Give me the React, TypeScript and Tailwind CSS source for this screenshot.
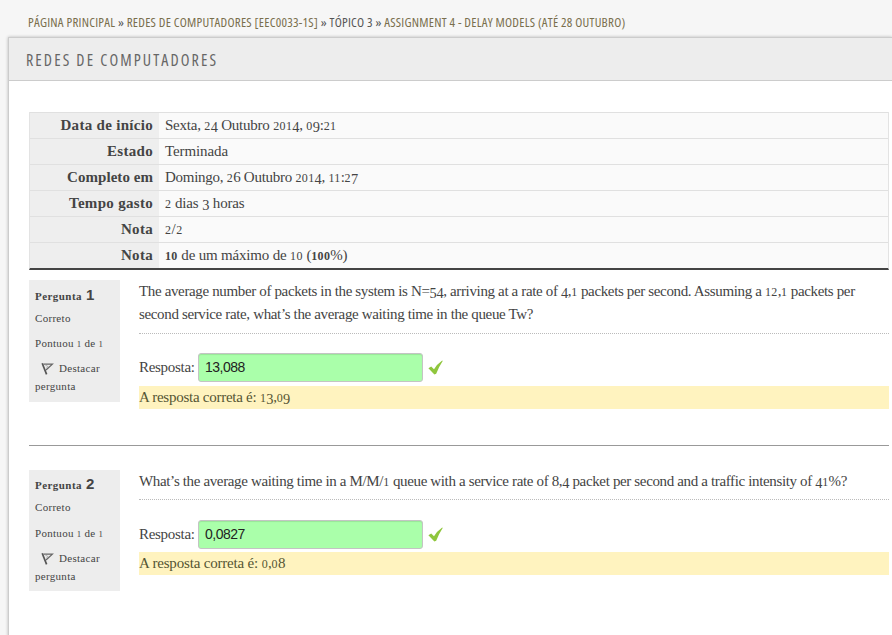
import { Fragment, type ReactNode } from "react";

/** Serif text whose digits sit like old-style figures: 0-2 at x-height, 3-5, 7 and 9 hanging below the line. */
function Serif({ children }: { children: string }) {
  return (
    <>
      {children.split(/([012]+|[34579]+)/).map((part, i) => {
        if (/^[012]+$/.test(part)) {
          return (
            <span key={i} className="text-[0.8em] leading-none tracking-[0.03em]">
              {part}
            </span>
          );
        }
        if (/^[34579]+$/.test(part)) {
          return (
            <span key={i} className="relative top-[0.16em] text-[0.96em] leading-none">
              {part}
            </span>
          );
        }
        return <Fragment key={i}>{part}</Fragment>;
      })}
    </>
  );
}

function FlagIcon() {
  return (
    <svg className="ml-[6px] mr-[5px] inline-block align-[-3px]" width="13" height="13" viewBox="0 0 13 13" fill="none">
      <path d="M1.2 1.2 L5.6 12.4" stroke="#555" strokeWidth="1.7" />
      <path d="M2.4 2.2 L11.4 2.2 L5 8" stroke="#666" strokeWidth="1.2" />
      <path d="M4.2 3 L7.2 4.6 L5 6.4" stroke="#aaa" strokeWidth="0.9" />
    </svg>
  );
}

function CheckIcon() {
  return (
    <svg className="ml-[5px] shrink-0" width="15" height="15" viewBox="0 0 15 15">
      <path d="M0.4 8.2 L3.2 6.6 L6 9.2 Q9 4 14.2 0.4 L14.7 1 Q11 6.5 8.2 13.8 L6.4 14.6 Z" fill="#8fc63d" />
    </svg>
  );
}

const rows: { label: string; labelClass: string; value: ReactNode; valueClass: string }[] = [
  {
    label: "Data de início",
    labelClass: "tracking-[0.3px]",
    value: <Serif>Sexta, 24 Outubro 2014, 09:21</Serif>,
    valueClass: "tracking-[-0.22px]",
  },
  { label: "Estado", labelClass: "tracking-[0.3px]", value: "Terminada", valueClass: "tracking-[-0.1px]" },
  {
    label: "Completo em",
    labelClass: "tracking-[0.05px]",
    value: <Serif>Domingo, 26 Outubro 2014, 11:27</Serif>,
    valueClass: "tracking-[-0.27px]",
  },
  {
    label: "Tempo gasto",
    labelClass: "tracking-[0.3px]",
    value: <Serif>2 dias 3 horas</Serif>,
    valueClass: "tracking-[-0.15px]",
  },
  { label: "Nota", labelClass: "tracking-[0.3px]", value: <Serif>2/2</Serif>, valueClass: "tracking-[0.8px]" },
  {
    label: "Nota",
    labelClass: "tracking-[0.3px]",
    value: (
      <>
        <b><Serif>10</Serif></b> <Serif>de um máximo de 10 (</Serif><b><Serif>100</Serif></b>%)
      </>
    ),
    valueClass: "tracking-[-0.18px]",
  },
];

type QuestionProps = {
  number: string;
  lines: string[];
  answer: string;
  correct: string;
  infoClass: string;
  headClass: string;
  gradeClass: string;
  textClass: string;
  formClass: string;
  feedbackClass: string;
};

function Question(props: QuestionProps) {
  const { number, lines, answer, correct, infoClass, headClass, gradeClass, textClass, formClass, feedbackClass } = props;
  return (
    <section className="flex items-start">
      <aside className={`${infoClass} w-[91px] shrink-0 bg-[#ededed] px-[6px] text-[11px] leading-[18px] tracking-[0.3px]`}>
        <h3 className={`${headClass} flex items-baseline gap-[4px] whitespace-nowrap font-bold tracking-[0.45px]`}>
          <span>Pergunta</span>
          <span className="font-['Liberation_Sans',sans-serif] text-[15px] tracking-normal">{number}</span>
        </h3>
        <p>Correto</p>
        <p className={`${gradeClass} whitespace-nowrap`}><Serif>Pontuou 1 de 1</Serif></p>
        <p className="mt-[7px]">
          <FlagIcon />
          Destacar pergunta
        </p>
      </aside>
      <div className="ml-[19px] w-[750px]">
        <div className={`${textClass} border-b border-dotted border-[#bbb]`}>
          {lines.map((line) => (
            <p key={line} className="h-[23px] whitespace-nowrap leading-[23px]">
              <Serif>{line}</Serif>
            </p>
          ))}
        </div>
        <div className={`${formClass} flex h-[29px] items-center`}>
          <span className="w-[59px] whitespace-nowrap">Resposta:</span>
          <input
            readOnly
            value={answer}
            className="h-[29px] w-[225px] rounded-[3px] border border-[#c4c4c4] bg-[#afa] px-[6px] pb-[2px] font-['Liberation_Sans',sans-serif] text-[14px] tracking-[-0.5px] text-[#222] shadow-[inset_0_1px_1px_rgba(0,0,0,0.1)] outline-none"
          />
          <CheckIcon />
        </div>
        <p className={`${feedbackClass} h-[23px] bg-[#fff3bf] leading-[23px] text-[#555533]`}>
          <Serif>{`A resposta correta é: ${correct}`}</Serif>
        </p>
      </div>
    </section>
  );
}

export default function App() {
  return (
    <div className="h-[635px] w-[892px] overflow-hidden bg-[#f6f6f6] font-['Liberation_Serif',serif] text-[15px] tracking-[-0.3px] text-[#444]">
      <nav className="flex h-[37px] items-start whitespace-pre pl-[28px] pt-[13px] font-['Open_Sans',sans-serif] text-[13px] leading-[18px] tracking-[0.235px] text-[#7a6f4d] [font-stretch:75%]">
        <a>PÁGINA PRINCIPAL</a>
        <span className="text-[#555]"> » </span>
        <a>REDES DE COMPUTADORES [EEC0033-1S]</a>
        <span className="text-[#555]"> » TÓPICO 3 » </span>
        <a>ASSIGNMENT 4 - DELAY MODELS (ATÉ 28 OUTUBRO)</a>
      </nav>
      <main className="ml-[8px] h-[600px] border-l border-t border-[#ccc] bg-white shadow-[0_0_3px_rgba(0,0,0,0.25)]">
        <header className="h-[43px] border-b border-[#ccc] bg-[#ededed] pl-[17px] font-['Open_Sans',sans-serif] text-[16px] leading-[45px] tracking-[2.1px] text-[#666] [font-stretch:75%]">
          REDES DE COMPUTADORES
        </header>
        <div className="ml-[20px] w-[860px]">
          <table className="mt-[31px] w-full border-separate border-spacing-0 border-x border-b-2 border-[#e3e3e3] border-b-[#444]">
            <tbody>
              {rows.map((row, i) => (
                <tr key={i} className="h-[26px]">
                  <th className={`${row.labelClass} h-[26px] w-[129px] border-t border-[#e0e0e0] bg-[#eee] p-0 pb-[2px] pr-[6px] text-right font-bold leading-[22px]`}>
                    {row.label}
                  </th>
                  <td className={`${row.valueClass} h-[26px] border-t border-[#e0e0e0] bg-[#fafafa] p-0 pb-[2px] pl-[6px] leading-[22px]`}>
                    {row.value}
                  </td>
                </tr>
              ))}
            </tbody>
          </table>
          <div className="mt-[10px] h-[165px]">
            <Question
              number="1"
              lines={[
                "The average number of packets in the system is N=54, arriving at a rate of 4,1 packets per second. Assuming a 12,1 packets per",
                "second service rate, what’s the average waiting time in the queue Tw?",
              ]}
              answer="13,088"
              correct="13,09"
              infoClass="h-[122px]"
              headClass="h-[29px] pt-[6px]"
              gradeClass="mt-[7px]"
              textClass="pb-[7px] tracking-[-0.355px]"
              formClass="mt-[19px]"
              feedbackClass="mt-[4px] tracking-[-0.26px]"
            />
          </div>
          <hr className="h-px border-0 bg-[#999]" />
          <div className="mt-[24px]">
            <Question
              number="2"
              lines={[
                "What’s the average waiting time in a M/M/1 queue with a service rate of 8,4 packet per second and a traffic intensity of 41%?",
              ]}
              answer="0,0827"
              correct="0,08"
              infoClass="h-[121px]"
              headClass="h-[28px] pt-[5px]"
              gradeClass="mt-[8px]"
              textClass="pb-[6px] tracking-[-0.355px]"
              formClass="mt-[20px]"
              feedbackClass="mt-[3px] tracking-[-0.18px]"
            />
          </div>
        </div>
      </main>
    </div>
  );
}
